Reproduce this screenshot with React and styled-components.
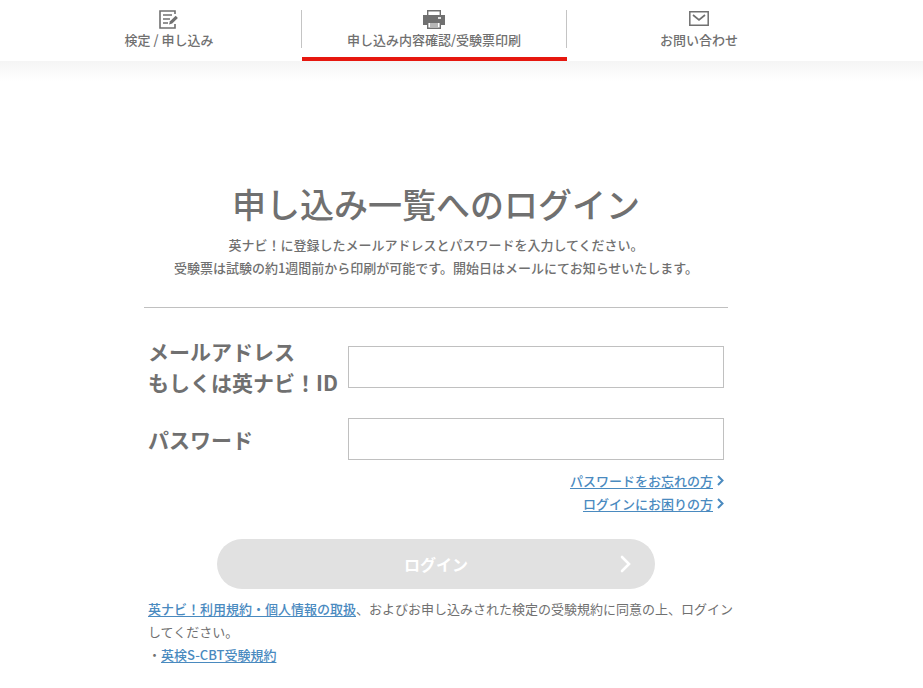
import React, {useState} from "react";
import styled, {createGlobalStyle} from "styled-components";

const GlobalStyle = createGlobalStyle`
    * {
        box-sizing: border-box;
    }
    body {
        margin: 0;
        background: #fff;
        color: #707070;
        font-family: "Noto Sans CJK JP", sans-serif;
        font-size: 13px;
        font-weight: 500;
        line-height: 23px;
    }
`

const Header = styled.header`
    padding-right: 54px;
    background: #fff;
`
const Nav = styled.nav`
    display: flex;
    max-width: 795px;
    margin: 0 auto;
`
const NavItem = styled.a`
    flex: 1;
    padding: 10px 0 9px;
    border-bottom: 4px solid ${({$active}) => $active ? '#e6170f' : 'transparent'};
    color: #707070;
    text-decoration: none;
`
const NavInner = styled.span`
    display: flex;
    flex-direction: column;
    align-items: center;
    height: 38px;
    border-right: 1px solid ${({$divider}) => $divider ? '#c4c4c4' : 'transparent'};
    line-height: 22px;
`
const NavIcon = styled.svg`
    display: block;
    flex-shrink: 0;
    height: 19px;
`

const Main = styled.main`
    padding: 119px 51px 22px 0;
    background: linear-gradient(#f5f5f5, #fff 20px);
`
const Container = styled.div`
    max-width: 600px;
    margin: 0 auto;
`
const Intro = styled.section`
    margin: 0 8px;
    padding-bottom: 28px;
    border-bottom: 1px solid #c0c0c0;
    text-align: center;
`
const Title = styled.h1`
    margin: 0 0 6px;
    font-size: 34px;
    font-weight: 500;
    line-height: 47px;
`
const Text = styled.p`
    margin: 0;
`

const Form = styled.form`
    padding: 28px 12px 0;
`
const Field = styled.div`
    display: flex;
    align-items: center;
    margin-bottom: ${({$last}) => $last ? '9px' : '20px'};
`
const Label = styled.label`
    flex: 0 0 200px;
    font-size: 21px;
    font-weight: 700;
    line-height: 31px;
    white-space: nowrap;
`
const Input = styled.input`
    flex: 1;
    min-width: 0;
    height: 42px;
    padding: 0 10px;
    border: 1px solid #c0c0c0;
    outline: none;
    color: #707070;
    font-family: inherit;
    font-size: 16px;
    &:focus{
        border-color: #4a8abf;
    }
`
const HelpLinks = styled.div`
    display: flex;
    flex-direction: column;
    align-items: flex-end;
`
const Link = styled.a`
    color: #4a8abf;
    text-decoration: underline;
    text-underline-offset: 2px;
`
const HelpLink = styled.span`
    display: flex;
    align-items: center;
    gap: 4px;
`
const Button = styled.button`
    display: grid;
    grid-template-columns: 1fr auto 1fr;
    align-items: center;
    width: 76%;
    height: 50px;
    margin: 24px auto 8px;
    padding: 0 24px;
    border: none;
    border-radius: 25px;
    background: #e1e1e1;
    color: #fff;
    font-family: inherit;
    font-size: 16px;
    font-weight: 700;
`
const ButtonLabel = styled.span`
    grid-column: 2;
`
const ButtonArrow = styled.svg`
    justify-self: end;
`
const Terms = styled.section`
    padding-left: 12px;
    font-weight: 400;
`
const StrongLink = styled(Link)`
    font-weight: 500;
`

const ApplyIcon = () => <NavIcon width="20" height="19" viewBox="0 0 20 19" fill="none" stroke="currentColor">
    <path d="M16 4V1H1v17h15v-4" strokeWidth="1.6"/>
    <path d="M4 5h9M4 9h7M4 13h5" strokeWidth="1.5"/>
    <path d="M10 14.5l1-3.3 5.7-5.4 2.2 2.2-5.7 5.5z" fill="currentColor" stroke="none"/>
</NavIcon>

const PrintIcon = () => <NavIcon width="22" height="19" viewBox="0 0 22 19">
    <path d="M0 5h22v10H0z" fill="currentColor"/>
    <path d="M4.7 5V.7h12.6V5" fill="#fff" stroke="currentColor" strokeWidth="1.4"/>
    <path d="M4.7 12.2h12.6v6.1H4.7z" fill="#fff" stroke="currentColor" strokeWidth="1.4"/>
    <path d="M7 14h8M7 16h8" stroke="currentColor" strokeWidth="1.2"/>
    <path d="M15 8h3" stroke="#fff" strokeWidth="1.6"/>
</NavIcon>

const MailIcon = () => <NavIcon width="20" height="19" viewBox="0 0 20 19" fill="none" stroke="currentColor" strokeWidth="1.5">
    <path d="M.8 1.8h18.4v13.4H.8z"/>
    <path d="M4 5l6 5 6-5" strokeWidth="1.7"/>
</NavIcon>

const LinkArrow = () => <svg width="7" height="11" viewBox="0 0 7 11" fill="none" stroke="#4a8abf" strokeWidth="2">
    <path d="M1 1l4.5 4.5L1 10"/>
</svg>

const navItems = [
    {label: '検定 / 申し込み', icon: <ApplyIcon/>},
    {label: '申し込み内容確認/受験票印刷', icon: <PrintIcon/>, active: true},
    {label: 'お問い合わせ', icon: <MailIcon/>},
]

const App = () => {
    const [login, setLogin] = useState('');
    const [password, setPassword] = useState('');
    return <>
        <GlobalStyle/>
        <Header>
            <Nav>
                {navItems.map((item, i) => <NavItem key={item.label} href="#" $active={item.active}>
                    <NavInner $divider={i < navItems.length - 1}>
                        {item.icon}
                        {item.label}
                    </NavInner>
                </NavItem>)}
            </Nav>
        </Header>
        <Main>
            <Container>
                <Intro>
                    <Title>申し込み一覧へのログイン</Title>
                    <Text>英ナビ！に登録したメールアドレスとパスワードを入力してください。</Text>
                    <Text>受験票は試験の約1週間前から印刷が可能です。開始日はメールにてお知らせいたします。</Text>
                </Intro>
                <Form onSubmit={(e) => e.preventDefault()}>
                    <Field>
                        <Label htmlFor="login">メールアドレス<br/>もしくは英ナビ！ID</Label>
                        <Input id="login" type="text" value={login} onChange={(e) => setLogin(e.target.value)}/>
                    </Field>
                    <Field $last>
                        <Label htmlFor="password">パスワード</Label>
                        <Input id="password" type="password" value={password} onChange={(e) => setPassword(e.target.value)}/>
                    </Field>
                    <HelpLinks>
                        <HelpLink><Link href="#">パスワードをお忘れの方</Link><LinkArrow/></HelpLink>
                        <HelpLink><Link href="#">ログインにお困りの方</Link><LinkArrow/></HelpLink>
                    </HelpLinks>
                    <Button type="submit">
                        <ButtonLabel>ログイン</ButtonLabel>
                        <ButtonArrow width="11" height="18" viewBox="0 0 11 18" fill="none" stroke="#fff" strokeWidth="2.6" strokeLinecap="round">
                            <path d="M2 2l7 7-7 7"/>
                        </ButtonArrow>
                    </Button>
                </Form>
                <Terms>
                    <Text><StrongLink href="#">英ナビ！利用規約・個人情報の取扱</StrongLink>、およびお申し込みされた検定の受験規約に同意の上、ログインしてください。</Text>
                    <Text>・<StrongLink href="#">英検S-CBT受験規約</StrongLink></Text>
                </Terms>
            </Container>
        </Main>
    </>
}

export default App;
